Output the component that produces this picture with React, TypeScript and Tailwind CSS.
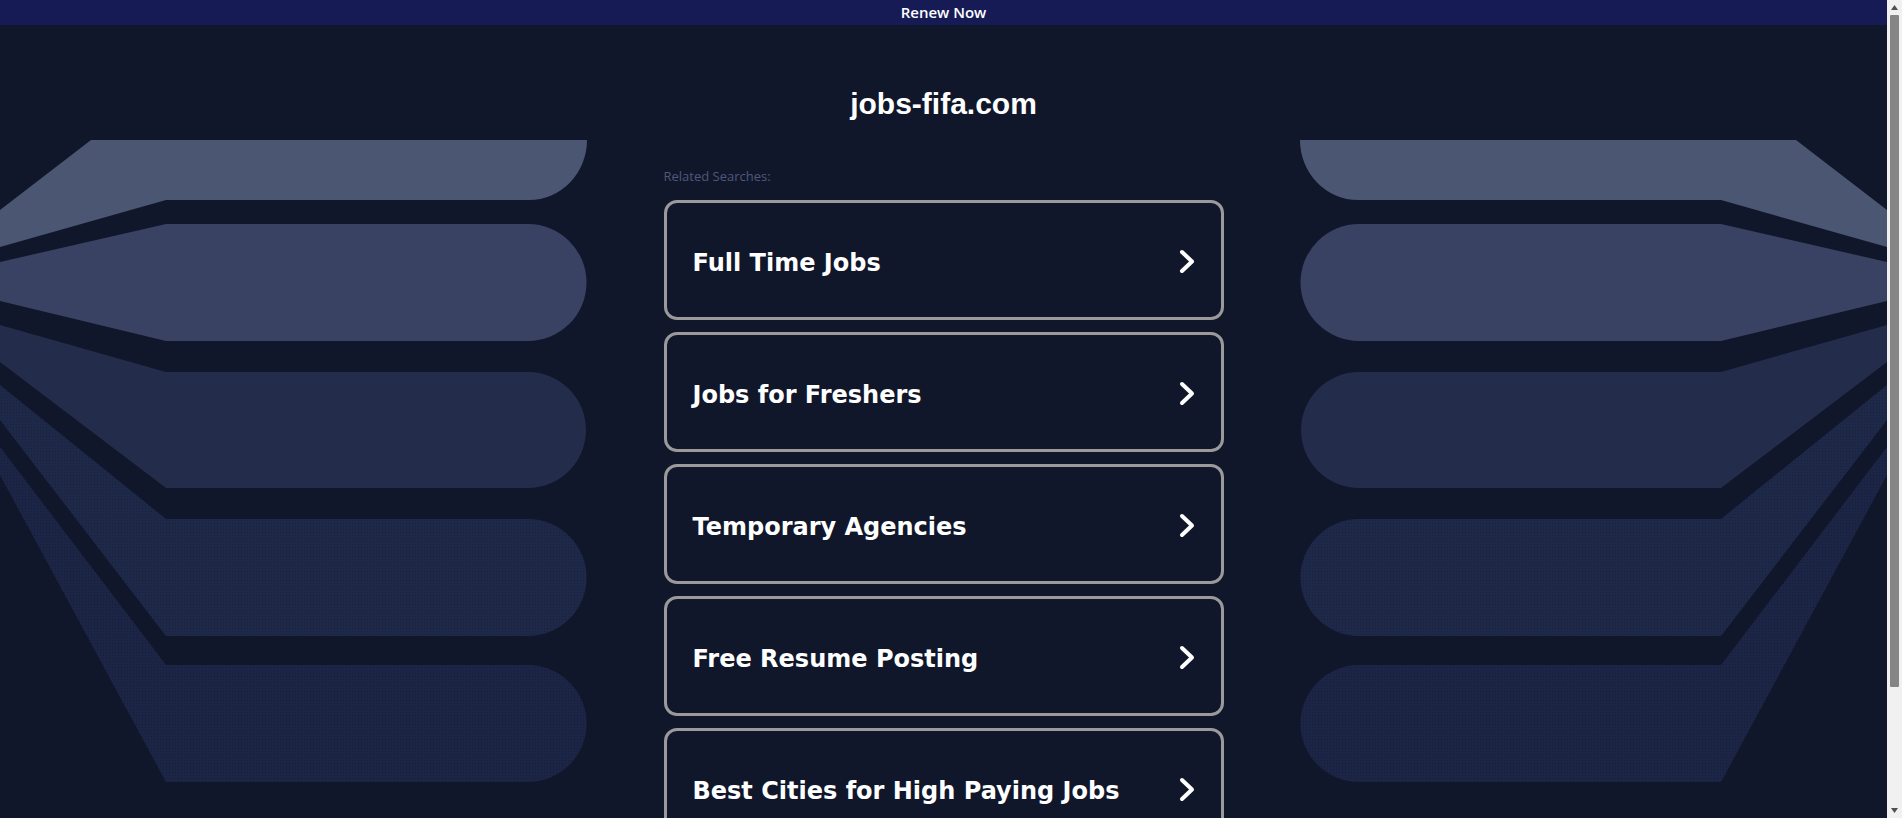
import React from "react";

const searches = [
	"Full Time Jobs",
	"Jobs for Freshers",
	"Temporary Agencies",
	"Free Resume Posting",
	"Best Cities for High Paying Jobs",
];

// decorative wing drawn in page coordinates (viewBox starts under the top bar)
const Wing = ({ className = "" }: { className?: string }) => (
	<svg
		className={`shrink-0 ${className}`}
		width="587"
		height="793"
		viewBox="0 25 587 793"
		aria-hidden="true"
	>
		<defs>
			<pattern id="dots4" width="3" height="3" patternUnits="userSpaceOnUse">
				<rect width="3" height="3" fill="#1e2849" />
				<circle cx="1.5" cy="1.5" r="0.6" fill="#161e3a" />
			</pattern>
			<pattern id="dots5" width="3" height="3" patternUnits="userSpaceOnUse">
				<rect width="3" height="3" fill="#1c2545" />
				<circle cx="1.5" cy="1.5" r="0.6" fill="#141b35" />
			</pattern>
		</defs>
		<path d="M91 140 L587 140 A58 60 0 0 1 529 200 L166 200 L0 247 L0 210 Z" fill="#4b5673" />
		<path d="M166 224 L528 224 A58.5 58.5 0 0 1 528 341 L166 341 L0 301 L0 262 Z" fill="#394262" />
		<path d="M166 372 L528 372 A58 58 0 0 1 528 488 L166 488 L0 362 L0 325 Z" fill="#232c4a" />
		<path d="M166 519 L528 519 A58.5 58.5 0 0 1 528 636 L166 636 L0 420 L0 385 Z" fill="url(#dots4)" />
		<path d="M0 447 L166 665 L528 665 A58.5 58.5 0 0 1 528 782 L166 782 L0 475 Z" fill="url(#dots5)" />
	</svg>
);

const Chevron = () => (
	<svg width="16" height="25" viewBox="0 0 16 25" className="mt-[2px] shrink-0">
		<polyline
			points="3,3 13,12.5 3,22"
			fill="none"
			stroke="white"
			strokeWidth="4"
			strokeLinecap="round"
			strokeLinejoin="round"
		/>
	</svg>
);

const Arrow = ({ up }: { up?: boolean }) => (
	<div className="flex h-[15px] items-center justify-center">
		<svg width="7" height="5" viewBox="0 0 7 5" className={up ? "" : "rotate-180"}>
			<polygon points="3.5,0 7,5 0,5" fill="#505050" />
		</svg>
	</div>
);

export default function App() {
	return (
		<div className="flex h-screen overflow-hidden bg-[#10172b]">
			<div className="min-w-0 flex-1">
				<div className="flex h-[25px] items-center justify-center bg-[#161b55]">
					<a
						href="#"
						className="text-[15px] font-semibold text-white [font-family:'Open_Sans',sans-serif]"
					>
						Renew Now
					</a>
				</div>
				<div className="flex items-start justify-between">
					<Wing />
					<div className="flex w-[560px] shrink-0 flex-col">
						<h1 className="mt-[61px] text-center text-[30px] leading-[36px] font-bold text-white [font-family:'Liberation_Sans',Arial,sans-serif]">
							jobs-fifa.com
						</h1>
						<p className="mt-[45px] text-[13px] leading-[18px] text-[#4e587a] [font-family:'Open_Sans',sans-serif]">
							Related Searches:
						</p>
						<div className="mt-[15px] flex flex-col gap-3">
							{searches.map((s) => (
								<a
									key={s}
									href="#"
									className="flex h-[120px] items-center justify-between rounded-[13px] border-[3px] border-[#9a9a9a] pr-[26px] pl-[26px]"
								>
									<span className="mt-[5px] text-[24px] font-bold text-white [font-family:'DejaVu_Sans',Verdana,sans-serif]">
										{s}
									</span>
									<Chevron />
								</a>
							))}
						</div>
					</div>
					<Wing className="-scale-x-100" />
				</div>
			</div>
			{/* page scrollbar */}
			<div className="flex w-[15px] shrink-0 flex-col bg-[#f1f1f1]">
				<Arrow up />
				<div className="mx-[3px] h-[672px] rounded-[1px] bg-[#858585]" />
				<div className="flex-1" />
				<Arrow />
			</div>
		</div>
	);
}
